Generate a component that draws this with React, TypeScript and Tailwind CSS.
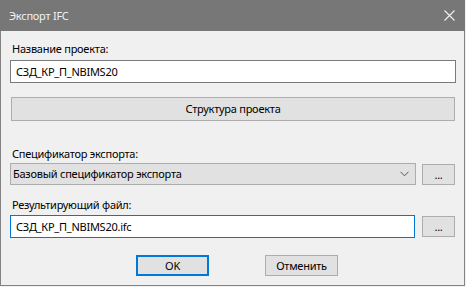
import React from "react";

function SmallButton({ label, className = "" }: { label: string; className?: string }) {
  return (
    <button
      className={`flex items-center justify-center bg-[#e1e1e1] border border-[#adadad] text-black ${className}`}
    >
      {label}
    </button>
  );
}

export default function App() {
  return (
    <div className="w-[466px] h-[287px] bg-[#f0f0f0] font-['Noto_Sans',sans-serif] text-[11px] tracking-[-0.25px] leading-[16px] text-black">
      <div className="w-[465px] h-[286px] border border-[#838383] border-t-0 bg-[#f0f0f0] flex flex-col">
        {/* title bar */}
        <div className="h-[31px] bg-[#777777] flex items-center justify-between pl-[9px] pr-[9px] -mx-px">
          <span className="text-[#f2f2f2]">Экспорт IFC</span>
          <svg width="11" height="11" viewBox="0 0 11 11" className="mr-px">
            <path d="M0.5 0.5 L10.5 10.5 M10.5 0.5 L0.5 10.5" stroke="#f2f2f2" strokeWidth="1.1" />
          </svg>
        </div>

        <div className="flex flex-col pl-[9px] pr-[9px]">
          <label className="mt-[10px] pl-[2px]">Название проекта:</label>
          <div className="mt-[3px] h-[23px] w-[446px] bg-white border border-[#7a7a7a] flex items-center pl-[5px]">
            СЗД_КР_П_NBIMS20
          </div>

          <button className="mt-[14px] ml-px h-[24px] w-[444px] bg-[#e1e1e1] border border-[#adadad] flex items-center justify-center">
            Структура проекта
          </button>

          <label className="mt-[25px] pl-[2px]">Спецификатор экспорта:</label>
          <div className="mt-px flex items-start">
            <div className="h-[22px] w-[406px] bg-[#e1e1e1] border border-[#adadad] flex items-center justify-between pl-[2px] pr-[6px]">
              <span>Базовый спецификатор экспорта</span>
              <svg width="9" height="6" viewBox="0 0 9 6">
                <path d="M0.5 0.8 L4.5 4.8 L8.5 0.8" fill="none" stroke="#555" strokeWidth="1" />
              </svg>
            </div>
            <SmallButton label="..." className="ml-[6px] mt-px h-[21px] w-[33px]" />
          </div>

          <label className="mt-[12px] pl-[2px]">Результирующий файл:</label>
          <div className="mt-[2px] flex items-start">
            <div className="h-[23px] w-[405px] bg-white border border-[#0078d7] flex items-center pl-[5px]">
              СЗД_КР_П_NBIMS20.ifc
            </div>
            <SmallButton label="..." className="ml-[7px] mt-px h-[21px] w-[33px]" />
          </div>

          <div className="mt-[17px] flex">
            <button className="ml-[126px] h-[21px] w-[73px] bg-[#e1e1e1] border-2 border-[#0078d7] flex items-center justify-center">
              OK
            </button>
            <SmallButton label="Отменить" className="ml-[56px] h-[21px] w-[73px]" />
          </div>
        </div>
      </div>
    </div>
  );
}
